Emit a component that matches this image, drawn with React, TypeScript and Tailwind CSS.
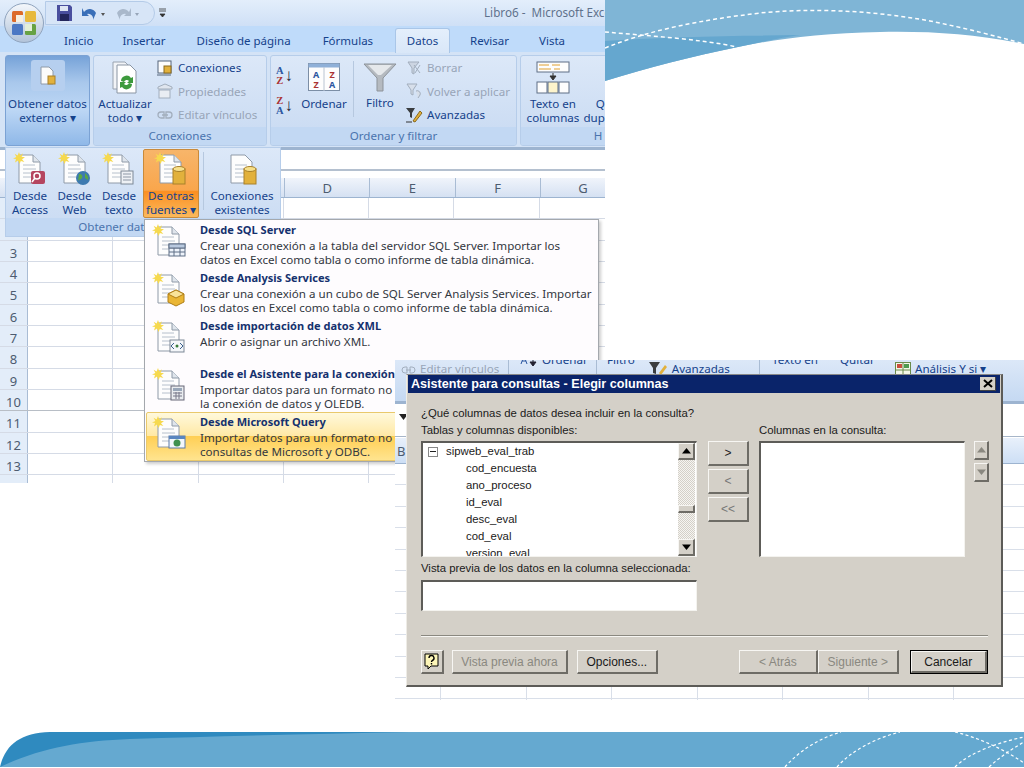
import type { ReactNode } from "react";

const ui = "font-['Noto_Sans','Open_Sans',sans-serif]";
const win = "font-['Liberation_Sans',Arial,sans-serif]";

function Star() {
  return (
    <path d="M6 0l1.2 3.6L10 1.2 8.6 4.8l3.4.4-3 2 2.4 2.8-3.6-1L6.6 12 5 8.6 2 10.6l1-3.6L0 6.4l3.4-1.4L1.6 1.800l3 1.6z" fill="#f6d94e" />
  );
}

function DocIcon({ overlay }: { overlay?: ReactNode }) {
  return (
    <svg width="34" height="36" viewBox="0 0 34 36" className="shrink-0">
      <path d="M6 3h14l7 7v21H6z" fill="#fdfdfd" stroke="#8f9aa8" />
      <path d="M20 3v7h7" fill="#dfe5ec" stroke="#8f9aa8" />
      <path d="M10 13h12M10 17h13M10 21h13M10 25h13" stroke="#b6c0cc" />
      <Star />
      {overlay}
    </svg>
  );
}

const Cylinder = (
  <g>
    <rect x="19" y="17" width="12" height="15" fill="#e2b13c" stroke="#a8802a" />
    <ellipse cx="25" cy="17" rx="6" ry="2.5" fill="#f7e08a" stroke="#a8802a" />
  </g>
);
const AccessKey = (
  <g>
    <rect x="18" y="19" width="14" height="13" rx="2" fill="#b5455f" />
    <circle cx="24" cy="24" r="3" fill="none" stroke="#fff" strokeWidth="1.5" />
    <path d="M22 26l-3 4" stroke="#fff" strokeWidth="1.5" />
  </g>
);
const Globe = (
  <g>
    <circle cx="25" cy="26" r="7" fill="#3d7ab0" />
    <path d="M21 22c3 0 4 2 3 4s-3 1-4 3M27 21c2 2 4 4 3 7l-3-2z" fill="#5aa845" />
  </g>
);
const TextSheet = (
  <g>
    <rect x="19" y="19" width="12" height="13" fill="#eef1f5" stroke="#7d8896" />
    <path d="M21 22h8M21 25h8M21 28h8" stroke="#8d97a5" />
  </g>
);
const TableSheet = (
  <g>
    <rect x="17" y="20" width="16" height="12" fill="#eef3fb" stroke="#5f6f86" />
    <path d="M17 24h16M17 28h16M22 20v12M28 20v12" stroke="#5f6f86" />
    <rect x="17" y="20" width="16" height="4" fill="#b9c9df" stroke="#5f6f86" />
  </g>
);
const Cube = (
  <g>
    <path d="M24 18l8 4v8l-8 4-8-4v-8z" fill="#eab635" stroke="#b07f19" />
    <path d="M16 22l8 4 8-4-8-4z" fill="#f9e49a" stroke="#b07f19" />
  </g>
);
const XmlSheet = (
  <g>
    <rect x="18" y="20" width="14" height="12" fill="#f4f6f9" stroke="#7d8896" />
    <path d="M22 23l-3 3 3 3M28 23l3 3-3 3" fill="none" stroke="#3a5f8c" />
    <circle cx="25" cy="26" r="1.5" fill="#3a7c3a" />
  </g>
);
const Calc = (
  <g>
    <rect x="19" y="18" width="13" height="14" fill="#e9ecef" stroke="#667" />
    <rect x="21" y="20" width="9" height="3" fill="#98a6b8" />
    <path d="M21 25h9M21 28h9M24 24v7M27 24v7" stroke="#778" />
  </g>
);
const QueryWin = (
  <g>
    <rect x="17" y="20" width="16" height="12" fill="#f3f7fc" stroke="#5a7aa8" />
    <rect x="17" y="20" width="16" height="3" fill="#5a86c0" />
    <circle cx="25" cy="27" r="3.5" fill="#3f9150" />
  </g>
);

function LargeButton({ lines, children, cls = "" }: { lines: string[]; children: ReactNode; cls?: string }) {
  return (
    <div className={`flex flex-col items-center ${cls}`}>
      <div className="h-[37px] flex items-center justify-center">{children}</div>
      <div className="mt-[1px] text-[11.6px] leading-[14px] text-[#15428b] text-center whitespace-nowrap">
        {lines.map((l) => (
          <div key={l}>{l}</div>
        ))}
      </div>
    </div>
  );
}

function SmallRow({ icon, label, off }: { icon: ReactNode; label: string; off?: boolean }) {
  return (
    <div className="h-[23.5px] flex items-center gap-[4px]">
      <svg width="18" height="18" viewBox="0 0 18 18" className="shrink-0">
        {icon}
      </svg>
      <span className={`text-[11.6px] whitespace-nowrap ${off ? "text-[#98a5b8]" : "text-[#15428b]"}`}>{label}</span>
    </div>
  );
}

function Group({ label, cls, children }: { label: string; cls: string; children: ReactNode }) {
  return (
    <div className={`h-[91px] rounded-[3px] border border-[#b6cdea] bg-gradient-to-b from-[#dce8f8] to-[#c8daf2] flex flex-col overflow-hidden shrink-0 ${cls}`}>
      <div className="h-[72px] flex">{children}</div>
      <div className="h-[18px] bg-[#c2d8f3] text-[11.6px] leading-[17px] text-center text-[#4a74ae]">{label}</div>
    </div>
  );
}

function MenuItem({ title, lines, overlay, hot }: { title: string; lines: string[]; overlay: ReactNode; hot?: boolean }) {
  return (
    <div className={`flex ${hot ? "h-[49px] -mt-[1px] pl-[5px] bg-[linear-gradient(#fff9dc_0%,#ffe9a6_48%,#ffcf55_50%,#ffe48f_100%)] border border-[#e9c96c] rounded-[2px]" : "h-[48px] pl-[6px]"}`}>
      <div className="w-[48px] pt-[3px] shrink-0">
        <DocIcon overlay={overlay} />
      </div>
      <div className="whitespace-nowrap">
        <div className="text-[11.05px] leading-[18px] font-bold text-[#15316e]">{title}</div>
        {lines.map((l) => (
          <div key={l} className="text-[11.6px] leading-[14px] text-[#33383f]">
            {l}
          </div>
        ))}
      </div>
    </div>
  );
}

function XLGrid() {
  const rows = Array.from({ length: 14 }, (_, i) => i + 1);
  return (
    <div>
      {rows.map((r) => (
        <div key={r} className={`h-[21.35px] flex border-b ${r === 10 ? "border-[#b8bec6]" : "border-[#d5dbe6]"}`}>
          <div className="w-[28px] shrink-0 bg-[#e3edf9] border-r border-[#a9bcd4] text-center text-[13px] leading-[24px] text-[#4d5c70]">{r}</div>
          {[0, 1, 2, 3, 4, 5, 6].map((c) => (
            <div key={c} className="w-[85.3px] shrink-0 border-r border-[#d5dbe6]" />
          ))}
        </div>
      ))}
    </div>
  );
}

function Raised({ cls = "", children }: { cls?: string; children?: ReactNode }) {
  return (
    <div className={`flex items-center justify-center border-t border-l border-[#f7f6f3] border-r-2 border-b-2 border-r-[#6e6c66] border-b-[#6e6c66] ${cls}`}>
      {children}
    </div>
  );
}

const sunken = "border-t-2 border-l-2 border-[#5d5c58] border-r border-b border-r-[#f4f3ef] border-b-[#f4f3ef] bg-white";

function Tri({ up, color = "#000" }: { up?: boolean; color?: string }) {
  return (
    <svg width="9" height="6" viewBox="0 0 9 6">
      <path d={up ? "M4.5 0L9 5.5H0z" : "M0 .5h9L4.5 6z"} fill={color} />
    </svg>
  );
}

export default function App() {
  const tree = ["cod_encuesta", "ano_proceso", "id_eval", "desc_eval", "cod_eval", "version_eval"];
  return (
    <div className="relative w-[1024px] h-[768px] bg-white overflow-hidden">
      {/* slide decoration */}
      <svg className="absolute left-[605px] top-0" width="419" height="90" viewBox="605 0 419 90">
        <path d="M605 0H1024V44C975 34 930 31 880 32C820 33 770 40 738 47C690 57 650 67 605 81z" fill="#7fb5d6" />
        <path d="M605 41C670 37 730 36 800 35C780 38 760 42 738 47C690 57 650 67 605 81z" fill="#65a7cf" />
        <path d="M605 48C650 30 700 20 760 13C810 8 870 10 930 21C965 28 1000 37 1024 44" fill="none" stroke="#fff" strokeWidth="1.5" strokeDasharray="4 3" />
        <path d="M605 32C650 36 700 39 737 47" fill="none" stroke="#fff" strokeWidth="1.5" strokeDasharray="4 3" />
      </svg>
      <svg className="absolute left-0 top-[731px]" width="1024" height="37" viewBox="0 731 1024 37">
        <path d="M0 767C5 745 20 733 50 732H1024V767z" fill="#2f8abf" />
        <path d="M0 767C40 748 80 741 130 739C220 736 320 734 410 732H1024V767z" fill="#65a9d0" />
        <path d="M785 767C800 750 820 738 841 732M837 767C850 752 875 738 900 732M955 732C980 738 1005 750 1024 763M955 767C970 752 1000 742 1024 737M989 767C1000 757 1010 750 1024 742" fill="none" stroke="#fff" strokeWidth="1.2" strokeDasharray="3 2.5" />
      </svg>

      {/* excel window */}
      <div className={`absolute left-0 top-0 w-[605px] h-[484px] ${ui}`}>
        <div className="h-[26px] bg-gradient-to-b from-[#e3eefb] to-[#cfe0f6] flex items-center pl-[484px]">
          <span className="text-[11.7px] text-[#5f728c] whitespace-pre w-[121px] overflow-hidden">Libro6 -  Microsoft Excel</span>
        </div>
        <div className="h-[26px] bg-[#bfdbfa] flex text-[11.5px] text-[#15428b] leading-[30px]">
          <span className="ml-[64px]">Inicio</span>
          <span className="ml-[29px]">Insertar</span>
          <span className="ml-[31px]">Diseño de página</span>
          <span className="ml-[32px]">Fórmulas</span>
          <span className="ml-[22px] w-[55px] text-center bg-gradient-to-b from-[#e4effc] to-[#d9e7f8] border border-b-0 border-[#a9c6e8] rounded-t-[3px] h-[25px] mt-[2px] leading-[24px]">Datos</span>
          <span className="ml-[20px]">Revisar</span>
          <span className="ml-[30px]">Vista</span>
        </div>
        <div className="h-[98px] bg-[#d4e3f6] pt-[3px] pl-[5px] flex gap-[3px] border-b-[3px] border-[#9db4d0] overflow-hidden">
          <div className="w-[85px] h-[91px] shrink-0 rounded-[3px] border border-[#7ba2d4] bg-[linear-gradient(#76a2d8_0%,#a9c8ec_30%,#bdd7f5_60%,#8fb8e8_100%)] flex flex-col items-center">
            <div className="mt-[4px] w-[34px] h-[31px] rounded-[3px] bg-[#b6cfef] flex items-center justify-center">
              <svg width="18" height="20" viewBox="0 0 18 20">
                <path d="M2 1h8l4 4v13H2z" fill="#fbfbfb" stroke="#8f9aa8" />
                <rect x="9" y="10" width="7" height="8" fill="#e2b13c" stroke="#a8802a" />
              </svg>
            </div>
            <div className="mt-[6px] text-[11.6px] leading-[14px] text-center text-[#15428b] whitespace-nowrap">
              Obtener datos
              <br />
              externos ▾
            </div>
          </div>

          <Group label="Conexiones" cls="w-[174px]">
            <LargeButton lines={["Actualizar", "todo ▾"]} cls="w-[62px] pt-[3px]">
              <svg width="30" height="34" viewBox="0 0 30 34">
                <path d="M3 1h12l5 5v22H3z" fill="#f2f4f7" stroke="#98a2af" />
                <path d="M7 4h13l6 6v22H7z" fill="#fff" stroke="#8a95a3" />
                <path d="M11 20a5.5 5.5 0 0 1 10-3l2-1v6h-6l2-2a3 3 0 0 0-5 1zM22 23a5.5 5.5 0 0 1-10 3l-2 1v-6h6l-2 2a3 3 0 0 0 5-1z" fill="#3d9a3d" />
              </svg>
            </LargeButton>
            <div>
              <SmallRow label="Conexiones" icon={<g><rect x="2" y="2" width="13" height="12" fill="#fdfdfd" stroke="#55647a" /><rect x="8" y="7" width="7" height="7" fill="#e2b13c" stroke="#8a6a1e" /><path d="M1 16h14" stroke="#55647a" /></g>} />
              <SmallRow off label="Propiedades" icon={<g><path d="M2 5l7-3 7 3v2H2z" fill="#dfe5ee" stroke="#a2aebd" /><rect x="3" y="8" width="11" height="8" fill="#e9edf3" stroke="#a2aebd" /></g>} />
              <SmallRow off label="Editar vínculos" icon={<path d="M2 9a3 3 0 0 1 3-3h3v6H5a3 3 0 0 1-3-3zm14 0a3 3 0 0 0-3-3h-3v6h3a3 3 0 0 0 3-3zM6 9h6" fill="none" stroke="#a2aebd" strokeWidth="1.3" />} />
            </div>
          </Group>

          <Group label="Ordenar y filtrar" cls="w-[247px]">
            <div className="w-[29px] pl-[5px] pt-[9px] flex flex-col gap-[9px] font-bold text-[#a33] text-[10.5px] leading-[10px] font-['Liberation_Serif',serif]">
              <div className="flex gap-[1px] items-center h-[21px]"><span className="text-center"><span className="text-[#2a56a0]">A</span><br />Z</span><span className="text-[#223] text-[17px] font-normal">↓</span></div>
              <div className="flex gap-[1px] items-center h-[21px]"><span className="text-center">Z<br /><span className="text-[#2a56a0]">A</span></span><span className="text-[#223] text-[17px] font-normal">↓</span></div>
            </div>
            <LargeButton lines={["Ordenar"]} cls="w-[48px] pt-[3px]">
              <svg width="32" height="30" viewBox="0 0 32 30">
                <rect x=".5" y=".5" width="31" height="27" fill="#fdfdfd" stroke="#7c8ea5" />
                <rect x=".5" y=".5" width="31" height="4" fill="#8fb0d8" />
                <path d="M16 4v24" stroke="#b9c4d2" />
                <text x="8" y="15" fontSize="9" fontWeight="700" textAnchor="middle" fill="#2a56a0">A</text>
                <text x="8" y="25" fontSize="9" fontWeight="700" textAnchor="middle" fill="#a33">Z</text>
                <text x="24" y="15" fontSize="9" fontWeight="700" textAnchor="middle" fill="#a33">Z</text>
                <text x="24" y="25" fontSize="9" fontWeight="700" textAnchor="middle" fill="#2a56a0">A</text>
              </svg>
            </LargeButton>
            <div className="w-px h-[56px] mt-[5px] ml-[5px] bg-[#b6c8df]" />
            <LargeButton lines={["Filtro"]} cls="w-[52px] pt-[2px]">
              <svg width="34" height="30" viewBox="0 0 34 30">
                <path d="M1 2h32L20 16v13h-6V16z" fill="#b5bac0" stroke="#8d939a" />
                <path d="M5 3h24L18 13h-3z" fill="#e5e8eb" />
              </svg>
            </LargeButton>
            <div className="-ml-[1px]">
              <SmallRow off label="Borrar" icon={<path d="M3 3h11L9 9v6l-2-1V9zM9 6l6 8M15 6l-5 8" fill="#ccd5e2" stroke="#a2aebd" />} />
              <SmallRow off label="Volver a aplicar" icon={<path d="M2 2h10L8 8v5L6 12V8zM11 9a3 3 0 0 1 4 4l-2 3" fill="#d7dfea" stroke="#a2aebd" />} />
              <SmallRow label="Avanzadas" icon={<g><path d="M1 2h9L7 7v5L5 11V7z" fill="#3a3d40" /><path d="M8 15l7-10 2 2-7 9z" fill="#e2b13c" stroke="#8a6a1e" /><path d="M1 16h6" stroke="#333" /></g>} />
            </div>
          </Group>

          <Group label="H" cls="w-[156px]">
            <LargeButton lines={["Texto en", "columnas"]} cls="w-[60px] ml-[2px] pt-[3px]">
              <svg width="34" height="34" viewBox="0 0 34 34">
                <rect x="1" y="1" width="32" height="10" fill="#fdfdfd" stroke="#5f6f86" />
                <path d="M3 4h10M16 4h8M3 8h12M18 8h6" stroke="#e0a030" />
                <path d="M17 12v4M14 15l3 4 3-4z" fill="#333" stroke="#333" />
                <rect x="1" y="21" width="10" height="11" fill="#fdfdfd" stroke="#5f6f86" />
                <rect x="12" y="21" width="10" height="11" fill="#fdf4cc" stroke="#5f6f86" />
                <rect x="23" y="21" width="10" height="11" fill="#fdfdfd" stroke="#5f6f86" />
              </svg>
            </LargeButton>
            <LargeButton lines={["Quitar", "duplicados"]} cls="w-[60px] pt-[3px]">
              <svg width="22" height="34" viewBox="0 0 22 34">
                <rect x="4" y="1" width="16" height="32" fill="#8ea3d8" />
                <rect x="4" y="7" width="16" height="5" fill="#f3d34a" />
                <rect x="4" y="18" width="16" height="5" fill="#f3d34a" />
              </svg>
            </LargeButton>
          </Group>
        </div>
        <div className="h-[21px] bg-white border-b-[2px] border-[#b4c0cf]" />
        <div className="h-[7px] bg-white" />
        <div className="h-[20px] flex bg-gradient-to-b from-[#f0f4fb] to-[#d5e1f2] border-b border-[#9db4d0] text-[13px] leading-[20px] text-center text-[#4d5c70]">
          <div className="w-[284px] shrink-0" />
          {["D", "E", "F", "G"].map((c) => (
            <div key={c} className="w-[85.3px] shrink-0 border-l border-[#a9bcd4]">
              {c}
            </div>
          ))}
        </div>
        <div className="h-[285px] overflow-hidden">
          <XLGrid />
        </div>

        {/* office button + quick access */}
        <div className="absolute left-[45px] top-[1px] w-[110px] h-[24px] rounded-r-full border border-[#b4cbe8] bg-[#d7e5f7] flex items-center pl-[11px] gap-[10px]">
          <svg width="15" height="16" viewBox="0 0 15 16">
            <path d="M0 0h13l2 2v14H0z" fill="#4a4f9e" />
            <rect x="3" y="1" width="8" height="5" fill="#dfe6f3" />
            <rect x="3" y="9" width="9" height="7" fill="#23265c" />
          </svg>
          <svg width="24" height="15" viewBox="0 0 24 15">
            <path d="M2 6a7 7 0 0 1 12 1l-3 7A5 5 0 0 0 5 8l2 2H0V2z" fill="#3a6fb8" />
            <path d="M19 7h4l-2 3z" fill="#555" />
          </svg>
          <svg width="24" height="15" viewBox="0 0 24 15">
            <path d="M13 6A7 7 0 0 0 1 7l3 7a5 5 0 0 1 6-6l-2 2h7V2z" fill="#a9b8cb" />
            <path d="M19 7h4l-2 3z" fill="#97a5b8" />
          </svg>
        </div>
        <svg className="absolute left-[158px] top-[8px]" width="10" height="10" viewBox="0 0 10 10">
          <path d="M1 1h7M1 3h7M2 6h5L4.5 9z" stroke="#333" fill="#333" strokeWidth=".8" />
        </svg>
        <div className="absolute left-[4px] top-[3px] w-[40px] h-[40px] rounded-full bg-gradient-to-b from-[#f4f7fb] to-[#b3c4da] border border-[#8fa3bd] flex items-center justify-center">
          <svg width="26" height="26" viewBox="0 0 26 26">
            <rect x="1" y="1" width="11" height="11" rx="1.5" fill="#dc6a2a" />
            <rect x="14" y="1" width="11" height="11" rx="1.5" fill="#e7b93c" />
            <rect x="1" y="14" width="11" height="11" rx="1.5" fill="#4c78c4" />
            <rect x="14" y="14" width="11" height="11" rx="1.5" fill="#67a243" />
            <rect x="5" y="5" width="7" height="7" fill="#f7efe0" />
            <rect x="14" y="14" width="7" height="7" fill="#e3efd8" />
          </svg>
        </div>

        {/* Obtener datos externos dropdown */}
        <div className="absolute left-[5px] top-[147px] w-[276px] h-[90px] border border-[#b6cdea] bg-gradient-to-b from-[#dce8f8] to-[#c8daf2] flex flex-col overflow-hidden">
          <div className="h-[71px] flex pl-[2px]">
            <LargeButton lines={["Desde", "Access"]} cls="w-[44px] pt-[3px]"><DocIcon overlay={AccessKey} /></LargeButton>
            <LargeButton lines={["Desde", "Web"]} cls="w-[45px] pt-[3px]"><DocIcon overlay={Globe} /></LargeButton>
            <LargeButton lines={["Desde", "texto"]} cls="w-[44px] pt-[3px]"><DocIcon overlay={TextSheet} /></LargeButton>
            <div className="w-[56px] h-[69px] ml-[2px] mt-[1px] rounded-[2px] border border-[#c98a3a] bg-[linear-gradient(#f7b56a_0%,#f9a64c_60%,#fb8f22_62%,#fbb95c_100%)]">
              <LargeButton lines={["De otras", "fuentes ▾"]} cls="pt-[1px]"><DocIcon overlay={Cylinder} /></LargeButton>
            </div>
            <div className="w-px h-[58px] ml-[4px] mt-[4px] bg-[#b6c8df]" />
            <LargeButton lines={["Conexiones", "existentes"]} cls="w-[70px] ml-[3px] pt-[3px]">
              <svg width="34" height="36" viewBox="0 0 34 36">
                <path d="M6 3h14l7 7v21H6z" fill="#fdfdfd" stroke="#8f9aa8" />
                <path d="M10 13h12M10 17h13M10 21h13M10 25h13" stroke="#b6c0cc" />
                {Cylinder}
              </svg>
            </LargeButton>
          </div>
          <div className="h-[18px] bg-[#c2d8f3] text-[11.6px] leading-[17px] text-center text-[#4a74ae]">Obtener datos externos</div>
        </div>

        {/* De otras fuentes menu */}
        <div className="absolute left-[144px] top-[219px] w-[455px] h-[243px] bg-[#fefcfe] border border-[#a4a8ad] shadow-[2px_2px_3px_rgba(0,0,0,0.2)] pt-[1px] px-[1px]">
          <MenuItem
            title="Desde SQL Server"
            overlay={TableSheet}
            lines={["Crear una conexión a la tabla del servidor SQL Server. Importar los", "datos en Excel como tabla o como informe de tabla dinámica."]}
          />
          <MenuItem
            title="Desde Analysis Services"
            overlay={Cube}
            lines={["Crear una conexión a un cubo de SQL Server Analysis Services. Importar", "los datos en Excel como tabla o como informe de tabla dinámica."]}
          />
          <MenuItem title="Desde importación de datos XML" overlay={XmlSheet} lines={["Abrir o asignar un archivo XML."]} />
          <MenuItem
            title="Desde el Asistente para la conexión"
            overlay={Calc}
            lines={["Importar datos para un formato no", "la conexión de datos y OLEDB."]}
          />
          <MenuItem
            hot
            title="Desde Microsoft Query"
            overlay={QueryWin}
            lines={["Importar datos para un formato no", "consultas de Microsoft y ODBC."]}
          />
        </div>
      </div>

      {/* worksheet window behind the dialog */}
      <div className={`absolute left-[395px] top-[360px] w-[629px] h-[340px] bg-white overflow-hidden ${ui}`}>
        <div className="h-[44px] bg-gradient-to-b from-[#dce8f8] to-[#c5d9f2] flex text-[11.6px] leading-[14px] text-[#15428b] border-b-[3px] border-[#9db4d0]">
          <div className="w-[114px] shrink-0 pl-[6px] pt-[2px] text-[#98a5b8] whitespace-nowrap border-r border-[#a9bcd4] flex gap-[4px]">
            <svg width="15" height="10" viewBox="0 0 15 10" className="mt-[3px]">
              <path d="M1 5a3 3 0 0 1 3-3h2v6H4a3 3 0 0 1-3-3zm13 0a3 3 0 0 0-3-3H9v6h2a3 3 0 0 0 3-3zM5 5h5" fill="none" stroke="#a2aebd" />
            </svg>
            Editar vínculos
          </div>
          <div className="w-[88px] shrink-0 pl-[11px] -mt-[7px] whitespace-nowrap border-r border-[#a9bcd4] flex gap-[4px]">
            <svg width="18" height="15" viewBox="0 0 18 15">
              <path d="M13 1v11M10 9l3 4 3-4z" stroke="#223" fill="#223" />
              <path d="M4 3l3 8M4 3L1 11M2 8h4" stroke="#2a56a0" fill="none" />
            </svg>
            Ordenar
          </div>
          <div className="w-[163px] shrink-0 pl-[10px] -mt-[7px] whitespace-nowrap border-r border-[#a9bcd4] flex">
            Filtro
            <svg width="20" height="14" viewBox="0 0 20 14" className="ml-[13px] mt-[8px]">
              <path d="M1 1h11L8 7v6L5 12V7z" fill="#3a3d40" />
              <path d="M11 12l6-8 2 2-6 8z" fill="#e2b13c" />
            </svg>
            <span className="ml-[4px] pt-[9px]">Avanzadas</span>
          </div>
          <div className="w-[80px] shrink-0 pl-[12px] -mt-[7px] whitespace-nowrap">Texto en</div>
          <div className="w-[55px] shrink-0 -mt-[7px] whitespace-nowrap">Quitar</div>
          <div className="whitespace-nowrap pt-[2px] flex gap-[4px]">
            <svg width="16" height="14" viewBox="0 0 16 14">
              <rect x=".5" y=".5" width="15" height="13" fill="#f3f7e8" stroke="#6a8a4a" />
              <rect x="2" y="2" width="5" height="4" fill="#c94f3d" />
              <rect x="9" y="2" width="5" height="4" fill="#4f9a4f" />
              <path d="M1 8h14M8 1v12" stroke="#6a8a4a" />
            </svg>
            Análisis Y si ▾
          </div>
        </div>
        <div className="h-[23px] bg-white pl-[4px] border-b border-[#a7b6c9]">
          <svg width="9" height="6" viewBox="0 0 9 6" className="mt-[10px]">
            <path d="M0 0h9L4.5 6z" fill="#222" />
          </svg>
        </div>
        <div className="h-[26px] mt-[1px] bg-gradient-to-b from-[#e8f0fb] to-[#cddff5] border-b border-[#9db4d0] text-[13px] pl-[2px] leading-[26px] text-[#4d5c70]">B</div>
        <div>
          {Array.from({ length: 12 }, (_, i) => (
            <div key={i} className="h-[21.4px] flex border-b border-[#d9dfe9]">
              <div className="w-[46px] shrink-0 border-r border-[#d9dfe9]" />
              {[0, 1, 2, 3, 4, 5, 6].map((c) => (
                <div key={c} className="w-[85.5px] shrink-0 border-r border-[#d9dfe9]" />
              ))}
            </div>
          ))}
        </div>
      </div>

      {/* query wizard dialog */}
      <div className={`absolute left-[406px] top-[374px] w-[597px] h-[313px] bg-[#d4d0c8] border-r-2 border-b-2 border-[#5c5b57] border-t border-l border-t-[#888] border-l-[#eeece6] ${win} text-[11.35px] text-[#1a1a1a]`}>
        <div className="h-[18px] mx-[1px] bg-[#0a246a] flex items-center justify-between pl-[3px] pr-[4px]">
          <span className="text-[12.6px] font-bold text-white whitespace-nowrap">Asistente para consultas - Elegir columnas</span>
          <div className="w-[16px] h-[14px] bg-[#d4d0c8] border-r border-b border-[#444] flex items-center justify-center">
            <svg width="10" height="9" viewBox="0 0 10 9">
              <path d="M1 1l8 7M9 1L1 8" stroke="#000" strokeWidth="2" />
            </svg>
          </div>
        </div>
        <div className="pl-[14px] pr-[12px] pt-[12px]">
          <div className="leading-[17px] whitespace-nowrap">¿Qué columnas de datos desea incluir en la consulta?</div>
          <div className="flex">
            <div className="w-[276px] shrink-0">
              <div className="leading-[17px] whitespace-nowrap">Tablas y columnas disponibles:</div>
              <div className={`h-[116px] mt-[2px] flex overflow-hidden ${sunken}`}>
                <div className="flex-1 pl-[5px] overflow-hidden">
                  <div className="flex items-center h-[17px] gap-[8px]">
                    <div className="w-[10px] h-[10px] border border-[#888] flex items-center justify-center">
                      <div className="w-[6px] h-px bg-[#222]" />
                    </div>
                    <span>sipweb_eval_trab</span>
                  </div>
                  {tree.map((t) => (
                    <div key={t} className="h-[17px] pl-[38px] leading-[17px]">
                      {t}
                    </div>
                  ))}
                </div>
                <div className="w-[17px] mr-[1px] shrink-0 flex flex-col bg-[repeating-conic-gradient(#d4d0c8_0%_25%,#f6f5f2_0%_50%)] bg-[length:2px_2px]">
                  <Raised cls="h-[17px] bg-[#d4d0c8]"><Tri up /></Raised>
                  <div className="flex-1 flex flex-col justify-end pb-[26px]">
                    <Raised cls="h-[8px] bg-[#d4d0c8]" />
                  </div>
                  <Raised cls="h-[17px] bg-[#d4d0c8]"><Tri /></Raised>
                </div>
              </div>
            </div>
            <div className="w-[41px] ml-[11px] mt-[19px] shrink-0 flex flex-col gap-[3px] text-[12px] text-[#777]">
              <Raised cls="h-[25px] text-[#222]">&gt;</Raised>
              <Raised cls="h-[25px]">&lt;</Raised>
              <Raised cls="h-[25px]">&lt;&lt;</Raised>
            </div>
            <div className="w-[206px] ml-[10px] shrink-0">
              <div className="leading-[17px] whitespace-nowrap">Columnas en la consulta:</div>
              <div className={`h-[116px] mt-[2px] ${sunken}`} />
            </div>
            <div className="w-[16px] ml-[9px] mt-[19px] flex flex-col gap-[3px]">
              <Raised cls="h-[19px]"><Tri up color="#8a8880" /></Raised>
              <Raised cls="h-[19px]"><Tri color="#8a8880" /></Raised>
            </div>
          </div>
          <div className="leading-[17px] mt-[3px] whitespace-nowrap">Vista previa de los datos en la columna seleccionada:</div>
          <div className={`w-[276px] h-[31px] mt-[3px] ${sunken}`} />
          <div className="mt-[24px] mr-[1px] border-t border-b border-t-[#8a8880] border-b-[#f7f6f3]" />
          <div className="mt-[13px] flex pr-[1px] text-[12px]">
            <Raised cls="w-[23px] h-[24px] bg-[#d4d0c8]">
              <svg width="15" height="17" viewBox="0 0 15 17">
                <path d="M1 1h13v12H7l-3 3v-3H1z" fill="#fdf6b8" stroke="#000" />
                <path d="M5 5a2.500 2.500 0 1 1 3.500 2.300c-.7.400-1 .8-1 1.700M7.500 10v1.500" fill="none" stroke="#000" strokeWidth="1.4" />
              </svg>
            </Raised>
            <Raised cls="w-[117px] h-[24px] ml-[8px] text-[#8a8880]">Vista previa ahora</Raised>
            <Raised cls="w-[81px] h-[24px] ml-[9px]">Opciones...</Raised>
            <Raised cls="w-[80px] h-[24px] ml-[81px] text-[#8a8880]">&lt; Atrás</Raised>
            <Raised cls="w-[81px] h-[24px] text-[#8a8880]">Siguiente &gt;</Raised>
            <div className="w-[79px] h-[24px] ml-[11px] border border-black flex">
              <Raised cls="flex-1">Cancelar</Raised>
            </div>
          </div>
        </div>
      </div>
    </div>
  );
}
